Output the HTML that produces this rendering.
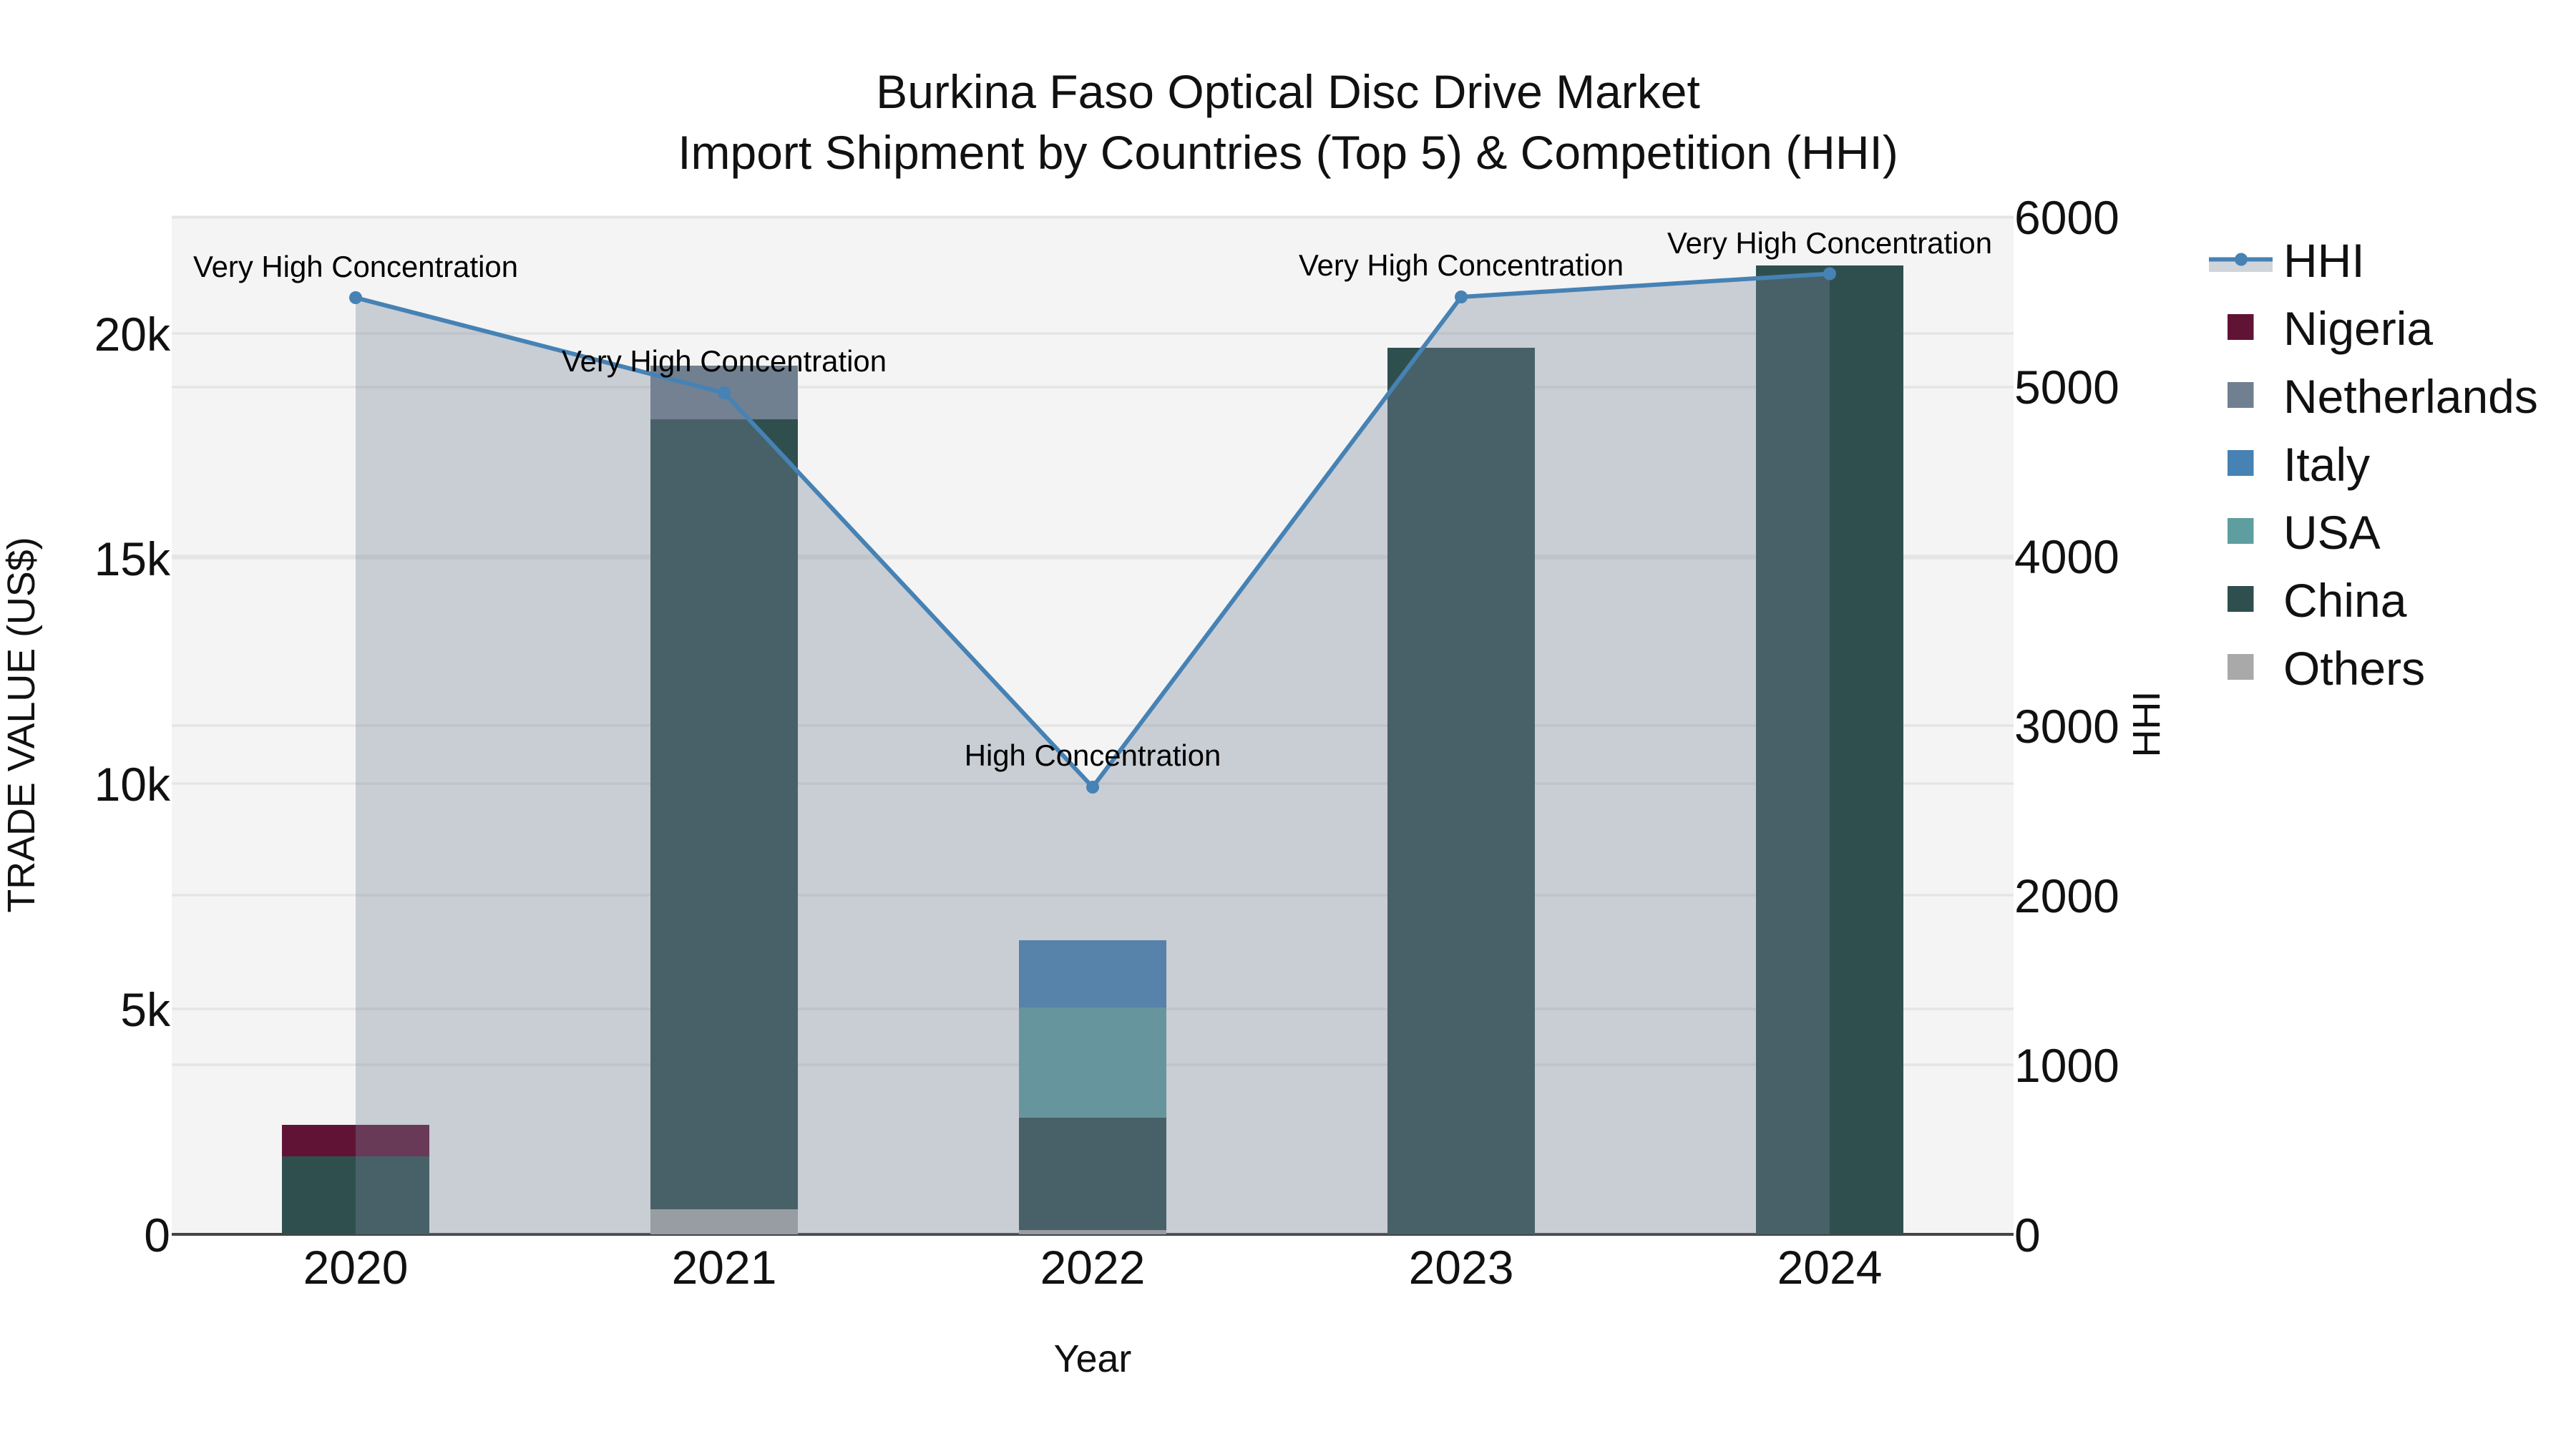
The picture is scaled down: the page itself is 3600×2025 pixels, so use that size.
<!DOCTYPE html>
<html lang="en">
<head>
<meta charset="utf-8">
<title>Burkina Faso Optical Disc Drive Market</title>
<style>
html,body{margin:0;padding:0;background:#fff;width:3600px;height:2025px;overflow:hidden}
svg{display:block}
text{font-family:"Liberation Sans",Arial,sans-serif;fill:#111}
</style>
</head>
<body>
<svg xmlns="http://www.w3.org/2000/svg" width="3600" height="2025" viewBox="0 0 3600 2025">
<rect width="3600" height="2025" fill="#fff"/>
<!-- plot background -->
<rect x="240" y="303" width="2574" height="1422" fill="#f4f4f4"/>
<!-- grid -->
<g stroke="#e5e5e5" stroke-width="3.5">
<line x1="240" x2="2814" y1="303.5" y2="303.5" stroke-width="4"/>
<line x1="240" x2="2814" y1="466" y2="466"/>
<line x1="240" x2="2814" y1="541" y2="541"/>
<line x1="240" x2="2814" y1="777" y2="777"/>
<line x1="240" x2="2814" y1="780" y2="780"/>
<line x1="240" x2="2814" y1="1014" y2="1014"/>
<line x1="240" x2="2814" y1="1095" y2="1095"/>
<line x1="240" x2="2814" y1="1251" y2="1251"/>
<line x1="240" x2="2814" y1="1410" y2="1410"/>
<line x1="240" x2="2814" y1="1488" y2="1488"/>
</g>
<line x1="240" x2="2814" y1="1725" y2="1725" stroke="#444" stroke-width="4"/>
<!-- bars -->
<g>
<rect x="394" y="1616" width="206" height="109" fill="#2f4f4f"/>
<rect x="394" y="1572" width="206" height="44" fill="#611335"/>
<rect x="909" y="1690" width="206" height="35" fill="#a9a9a9"/>
<rect x="909" y="586" width="206" height="1104" fill="#2f4f4f"/>
<rect x="909" y="511" width="206" height="75" fill="#708090"/>
<rect x="1424" y="1719" width="206" height="6" fill="#a9a9a9"/>
<rect x="1424" y="1562" width="206" height="157" fill="#2f4f4f"/>
<rect x="1424" y="1408" width="206" height="154" fill="#5f9ea0"/>
<rect x="1424" y="1314" width="206" height="94" fill="#4682b4"/>
<rect x="1939" y="486" width="206" height="1239" fill="#2f4f4f"/>
<rect x="2454" y="371" width="206" height="1354" fill="#2f4f4f"/>
</g>
<!-- HHI area -->
<polygon points="497,416 1012,549 1527,1100 2042,415 2557,382.5 2557,1725 497,1725" fill="rgb(121,133,152)" fill-opacity="0.35"/>
<polyline points="497,416 1012,549 1527,1100 2042,415 2557,382.5" fill="none" stroke="#4682b4" stroke-width="6" stroke-linejoin="round"/>
<g fill="#4682b4">
<circle cx="497" cy="416" r="9"/>
<circle cx="1012" cy="549" r="9"/>
<circle cx="1527" cy="1100" r="9"/>
<circle cx="2042" cy="415" r="9"/>
<circle cx="2557" cy="382.5" r="9"/>
</g>
<!-- point labels -->
<g font-size="41.9" text-anchor="middle">
<text x="497" y="387" style="fill:#000">Very High Concentration</text>
<text x="1012" y="519" style="fill:#000">Very High Concentration</text>
<text x="1527" y="1070" style="fill:#000">High Concentration</text>
<text x="2042" y="385" style="fill:#000">Very High Concentration</text>
<text x="2557" y="354" style="fill:#000">Very High Concentration</text>
</g>
<!-- title -->
<g font-size="66" text-anchor="middle">
<text x="1800" y="151">Burkina Faso Optical Disc Drive Market</text>
<text x="1800" y="236">Import Shipment by Countries (Top 5) &amp; Competition (HHI)</text>
</g>
<!-- left ticks -->
<g font-size="66" text-anchor="end">
<text x="238" y="490">20k</text>
<text x="238" y="804">15k</text>
<text x="238" y="1119">10k</text>
<text x="238" y="1434">5k</text>
<text x="238" y="1749">0</text>
</g>
<!-- right ticks -->
<g font-size="66">
<text x="2815" y="327">6000</text>
<text x="2815" y="564">5000</text>
<text x="2815" y="801">4000</text>
<text x="2815" y="1038">3000</text>
<text x="2815" y="1275">2000</text>
<text x="2815" y="1512">1000</text>
<text x="2815" y="1749">0</text>
</g>
<!-- x ticks -->
<g font-size="66" text-anchor="middle">
<text x="497" y="1794">2020</text>
<text x="1012" y="1794">2021</text>
<text x="1527" y="1794">2022</text>
<text x="2042" y="1794">2023</text>
<text x="2557" y="1794">2024</text>
</g>
<!-- axis titles -->
<g font-size="53.8" text-anchor="middle">
<text x="1527" y="1917">Year</text>
<text transform="translate(48 1013) rotate(-90)">TRADE VALUE (US$)</text>
<text transform="translate(3018 1012) rotate(-90)">HHI</text>
</g>
<!-- legend -->
<rect x="3087" y="362" width="89" height="18" fill="rgb(121,133,152)" fill-opacity="0.35"/>
<line x1="3087" x2="3176" y1="362.5" y2="362.5" stroke="#4682b4" stroke-width="6"/>
<circle cx="3132" cy="362.5" r="9" fill="#4682b4"/>
<rect x="3113" y="439" width="36.5" height="36" fill="#611335"/>
<rect x="3113" y="534" width="36.5" height="36" fill="#708090"/>
<rect x="3113" y="629" width="36.5" height="36" fill="#4682b4"/>
<rect x="3113" y="724" width="36.5" height="36" fill="#5f9ea0"/>
<rect x="3113" y="819" width="36.5" height="36" fill="#2f4f4f"/>
<rect x="3113" y="914" width="36.5" height="36" fill="#a9a9a9"/>
<g font-size="66">
<text x="3191" y="387">HHI</text>
<text x="3191" y="482">Nigeria</text>
<text x="3191" y="577">Netherlands</text>
<text x="3191" y="672">Italy</text>
<text x="3191" y="767">USA</text>
<text x="3191" y="862">China</text>
<text x="3191" y="957">Others</text>
</g>
</svg>
</body>
</html>
